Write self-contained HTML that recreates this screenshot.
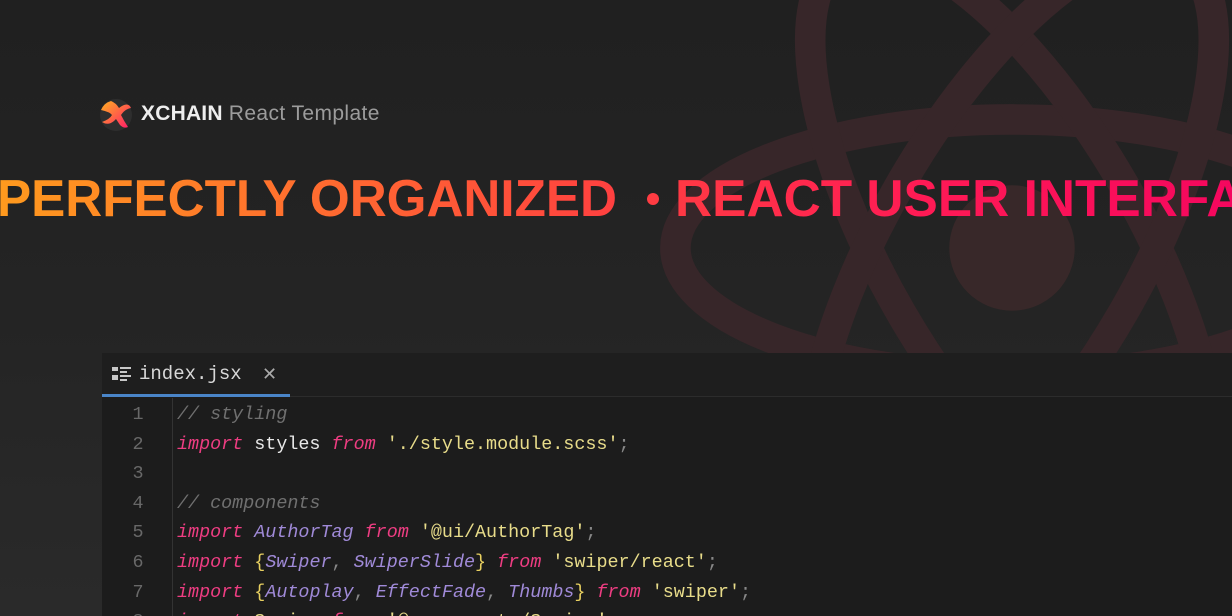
<!DOCTYPE html>
<html><head><meta charset="utf-8"><style>
*{margin:0;padding:0;box-sizing:border-box}
html,body{width:1232px;height:616px;overflow:hidden}
body{background:linear-gradient(180deg,#202020 0%,#242424 50%,#2a2a2a 100%);position:relative;font-family:"Liberation Sans",sans-serif}
.brand{position:absolute;left:141px;top:102px;font-size:21px;color:#eee;font-weight:bold;letter-spacing:0.2px}
.brand span{color:#9c9c9c;font-weight:normal;letter-spacing:0.4px}
.panel{position:absolute;left:102px;top:353px;width:1130px;height:263px;background:#1c1c1c;overflow:hidden}
.tabbar{height:44px;border-bottom:1px solid #2c2c2c;position:relative;background:#1e1e1e}
.tab{position:absolute;left:0;top:0;width:188px;height:44px;border-bottom:3px solid #4a85c8}
.tabname{position:absolute;left:37px;top:10px;font-family:"Liberation Mono",monospace;font-size:19px;color:#d8d8d8}
.x{position:absolute;left:160px;top:11px;color:#aaa;font-size:18px}
.gut{position:absolute;left:70px;top:45px;width:1px;height:230px;background:#333}
.code{position:absolute;left:0;top:47px;font-family:"Liberation Mono",monospace;font-size:18.4px;line-height:29.6px;white-space:pre;color:#e8e8e8}
.ln{display:inline-block;width:75px;text-align:center;color:#686868;padding-right:3px}
.c{color:#707070;font-style:italic}.k{color:#ee3d82;font-style:italic}.s{color:#e8dc8a}.t{color:#a08ad8;font-style:italic}.p{color:#888}.b{color:#e8d060}
</style></head><body>
<svg style="position:absolute;left:0;top:0" width="1232" height="616">
<defs><linearGradient id="hg" x1="0" y1="0" x2="1232" y2="0" gradientUnits="userSpaceOnUse"><stop offset="0" stop-color="#ff9a1e"/><stop offset="0.5" stop-color="#ff4040"/><stop offset="0.75" stop-color="#ff1a55"/><stop offset="1" stop-color="#f5075e"/></linearGradient>
<linearGradient id="lg" x1="0" y1="0" x2="1" y2="1"><stop offset="0" stop-color="#ffb020"/><stop offset="1" stop-color="#ff1a6a"/></linearGradient></defs>
<g transform="translate(1012,248) scale(30.6)" fill="none" stroke="#372629" stroke-width="1">
<circle r="2.05" fill="#382829" stroke="none"/>
<ellipse rx="11" ry="4.2"/><ellipse rx="11" ry="4.2" transform="rotate(60)"/><ellipse rx="11" ry="4.2" transform="rotate(120)"/>
</g>
<g font-family="Liberation Sans,sans-serif" font-weight="bold" font-size="52" fill="url(#hg)">
<text x="-3" y="216" textLength="620" lengthAdjust="spacingAndGlyphs">PERFECTLY ORGANIZED</text>
<circle cx="653" cy="199" r="6"/>
<text x="675" y="216" textLength="640" lengthAdjust="spacingAndGlyphs">REACT USER INTERFACE</text>
</g>
<g transform="translate(116,115)">
<circle r="16" fill="#2e2e2e"/>
<path d="M-15,-5 Q-6,-3 -4,0 Q-6,4 -14,7 Q-8,11 -2,6 L0,4 L4,10 Q8,14 12,12 Q8,6 5,0 Q9,-6 15,-7 Q12,-14 3,-7 Q0,-12 -5,-14 Q-12,-12 -15,-5Z" fill="url(#lg)"/>
</g>
</svg>
<div class="brand">XCHAIN <span>React Template</span></div>
<div class="panel">
<div class="tabbar"><div class="tab">
<svg style="position:absolute;left:10px;top:13px" width="20" height="16"><g fill="#c8c8c8"><rect x="0" y="1" width="6" height="4"/><rect x="0" y="9" width="6" height="5"/><rect x="8" y="1" width="11" height="2"/><rect x="8" y="5" width="7" height="2"/><rect x="8" y="9" width="11" height="2"/><rect x="8" y="13" width="7" height="2"/></g></svg>
<div class="tabname">index.jsx</div><div class="x">✕</div></div></div>
<div class="gut"></div>
<div class="code"><span class="ln">1</span><span class="c">// styling</span>
<span class="ln">2</span><span class="k">import</span> styles <span class="k">from</span> <span class="s">'./style.module.scss'</span><span class="p">;</span>
<span class="ln">3</span>
<span class="ln">4</span><span class="c">// components</span>
<span class="ln">5</span><span class="k">import</span> <span class="t">AuthorTag</span> <span class="k">from</span> <span class="s">'@ui/AuthorTag'</span><span class="p">;</span>
<span class="ln">6</span><span class="k">import</span> <span class="b">{</span><span class="t">Swiper</span><span class="p">,</span> <span class="t">SwiperSlide</span><span class="b">}</span> <span class="k">from</span> <span class="s">'swiper/react'</span><span class="p">;</span>
<span class="ln">7</span><span class="k">import</span> <span class="b">{</span><span class="t">Autoplay</span><span class="p">,</span> <span class="t">EffectFade</span><span class="p">,</span> <span class="t">Thumbs</span><span class="b">}</span> <span class="k">from</span> <span class="s">'swiper'</span><span class="p">;</span>
<span class="ln">8</span><span class="k">import</span> <span class="s">Spring</span> <span class="k">from</span> <span class="s">'@components/Spring'</span><span class="p">;</span></div>
</div>
</body></html>
